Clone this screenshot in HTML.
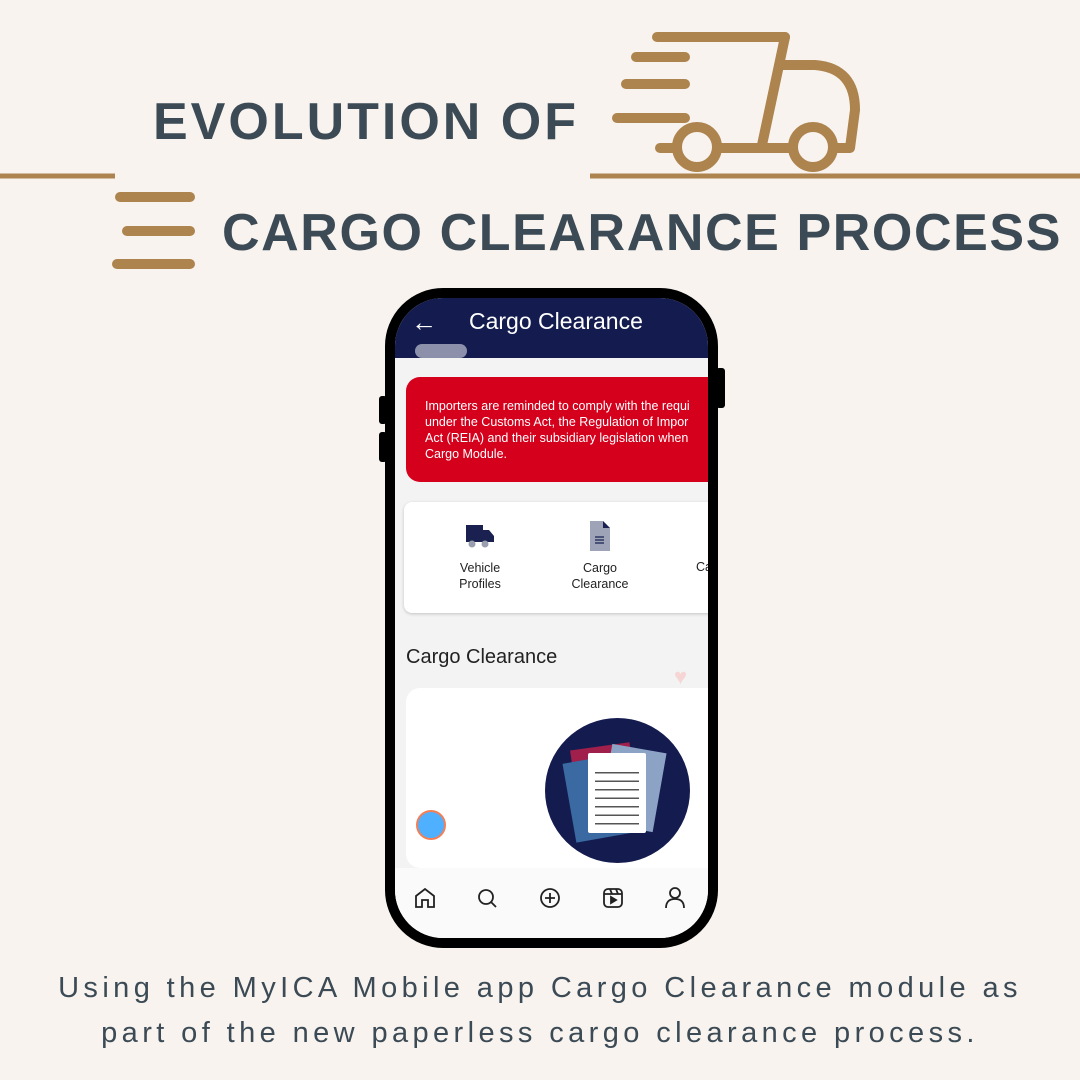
<!DOCTYPE html>
<html><head><style>
body{margin:0;width:1080px;height:1080px;background:#f8f3ee;position:relative;overflow:hidden;font-family:"Liberation Sans",sans-serif}
.t{position:absolute;color:#3b4a55;font-weight:bold;white-space:nowrap}
.phone{position:absolute;left:385px;top:288px;width:313px;height:640px;border:10px solid #000;border-radius:58px;background:#f4f3f3;overflow:hidden}
.btn{position:absolute;background:#000;border-radius:3px}
.cap{position:absolute;left:0;width:1080px;text-align:center;color:#3b4a55;font-size:29px;letter-spacing:4.4px}
</style></head><body>
<svg width="1080" height="300" style="position:absolute;left:0;top:0" fill="none" stroke="#ad834e" stroke-width="10" stroke-linecap="round" stroke-linejoin="round">
<line x1="0" y1="176" x2="115" y2="176" stroke-linecap="butt" stroke-width="5"/>
<line x1="590" y1="176" x2="1080" y2="176" stroke-linecap="butt" stroke-width="5"/>
<line x1="657" y1="37" x2="785" y2="37"/>
<path d="M785 37 L762 145"/>
<line x1="636" y1="57" x2="685" y2="57"/>
<line x1="626" y1="84" x2="685" y2="84"/>
<line x1="617" y1="118" x2="685" y2="118"/>
<path d="M783 65 H815 Q855 68 855 110 L850 148 H835"/>
<path d="M660 148 H677 M717 148 H793"/>
<circle cx="697" cy="147" r="20"/>
<circle cx="813" cy="147" r="20"/>
<line x1="120" y1="197" x2="190" y2="197"/>
<line x1="127" y1="231" x2="190" y2="231"/>
<line x1="117" y1="264" x2="190" y2="264"/>
</svg>
<div class="t" style="left:153px;top:92px;font-size:52px;letter-spacing:3px">EVOLUTION OF</div>
<div class="t" style="left:222px;top:203px;font-size:52px;letter-spacing:1.6px">CARGO CLEARANCE PROCESS</div>
<div class="btn" style="left:379px;top:396px;width:8px;height:28px"></div>
<div class="btn" style="left:379px;top:432px;width:8px;height:30px"></div>
<div class="btn" style="left:716px;top:368px;width:9px;height:40px"></div>
<div class="phone">
 <div style="position:absolute;left:0;top:0;width:313px;height:60px;background:#141c4f"></div>
 <div style="position:absolute;left:16px;top:9px;color:#fff;font-size:26px">←</div>
 <div style="position:absolute;left:74px;top:10px;color:#fff;font-size:23px">Cargo Clearance</div>
 <div style="position:absolute;left:20px;top:46px;width:52px;height:14px;border-radius:7px;background:#8d90aa"></div>
 <div style="position:absolute;left:11px;top:79px;width:320px;height:105px;border-radius:14px;background:#d5001c;color:#fff;font-size:12.5px;line-height:16px;padding:21px 0 0 19px;box-sizing:border-box;white-space:nowrap">Importers are reminded to comply with the requi<br>under the Customs Act, the Regulation of Impor<br>Act (REIA) and their subsidiary legislation when<br>Cargo Module.</div>
 <div style="position:absolute;left:9px;top:204px;width:320px;height:111px;border-radius:8px;background:#fff;box-shadow:0 1px 3px rgba(0,0,0,.2)">
  <svg style="position:absolute;left:61px;top:20px" width="30" height="26"><path d="M1 3h17v17H1z M18 8h6l5 6v6H18z" fill="#1a2150"/><circle cx="7" cy="22" r="3.5" fill="#9a9fb0"/><circle cx="20" cy="22" r="3.5" fill="#9a9fb0"/></svg>
  <svg style="position:absolute;left:184px;top:19px" width="22" height="30"><path d="M2 0h13l7 7v23H2z" fill="#9ea3b8"/><path d="M15 0l7 7h-7z" fill="#1a2150"/><path d="M7 16h9M7 19h9M7 22h9" stroke="#1a2150" stroke-width="1.3"/></svg>
  <div style="position:absolute;left:36px;top:58px;width:80px;text-align:center;font-size:12.5px;line-height:16px;color:#222">Vehicle<br>Profiles</div>
  <div style="position:absolute;left:156px;top:58px;width:80px;text-align:center;font-size:12.5px;line-height:16px;color:#222">Cargo<br>Clearance</div>
  <div style="position:absolute;left:292px;top:58px;font-size:12.5px;color:#222">Ca</div>
 </div>
 <div style="position:absolute;left:11px;top:348px;font-size:20px;color:#222">Cargo Clearance</div>
 <div style="position:absolute;left:279px;top:366px;color:#f6d5d5;font-size:22px">♥</div>
 <div style="position:absolute;left:11px;top:390px;width:320px;height:180px;border-radius:14px;background:#fff"></div>
 <div style="position:absolute;left:21px;top:512px;width:26px;height:26px;border-radius:50%;background:#4fb0ff;border:2px solid #f47f56"></div>
 <div style="position:absolute;left:150px;top:420px;width:145px;height:145px;border-radius:50%;background:#141c4f;overflow:hidden">
  <div style="position:absolute;left:30px;top:28px;width:60px;height:75px;background:#a01f4b;transform:rotate(-8deg)"></div>
  <div style="position:absolute;left:60px;top:30px;width:55px;height:80px;background:#8da3c6;transform:rotate(10deg)"></div>
  <div style="position:absolute;left:24px;top:40px;width:60px;height:80px;background:#3b6aa3;transform:rotate(-10deg)"></div>
  <div style="position:absolute;left:43px;top:35px;width:58px;height:80px;background:#fff;border-radius:2px;background-image:repeating-linear-gradient(#fff 0 7px,#555 7px 8.5px);background-size:44px 60px;background-position:7px 12px;background-repeat:no-repeat"></div>
 </div>
 <div style="position:absolute;left:0;top:570px;width:313px;height:80px;background:#fafafa"></div>
 <svg style="position:absolute;left:18px;top:588px" width="280" height="26" fill="none" stroke="#222" stroke-width="1.8">
  <path d="M3 21V10l9-7 9 7v11h-6v-7h-6v7z"/>
  <circle cx="73" cy="11" r="7"/><path d="M78 16l5 5"/>
  <circle cx="137" cy="12" r="9"/><path d="M137 7v10M132 12h10"/>
  <rect x="191" y="3" width="18" height="18" rx="4"/><path d="M191 8h18M197 3l2 5M203 3l2 5"/><path d="M198 11l5 3-5 3z" fill="#222"/>
  <circle cx="262" cy="7" r="5"/><path d="M253 22c0-7 4-9 9-9s9 2 9 9"/>
 </svg>
</div>
<div class="cap" style="top:972px">Using the MyICA Mobile app Cargo Clearance module as</div>
<div class="cap" style="top:1017px">part of the new paperless cargo clearance process.</div>
</body></html>
